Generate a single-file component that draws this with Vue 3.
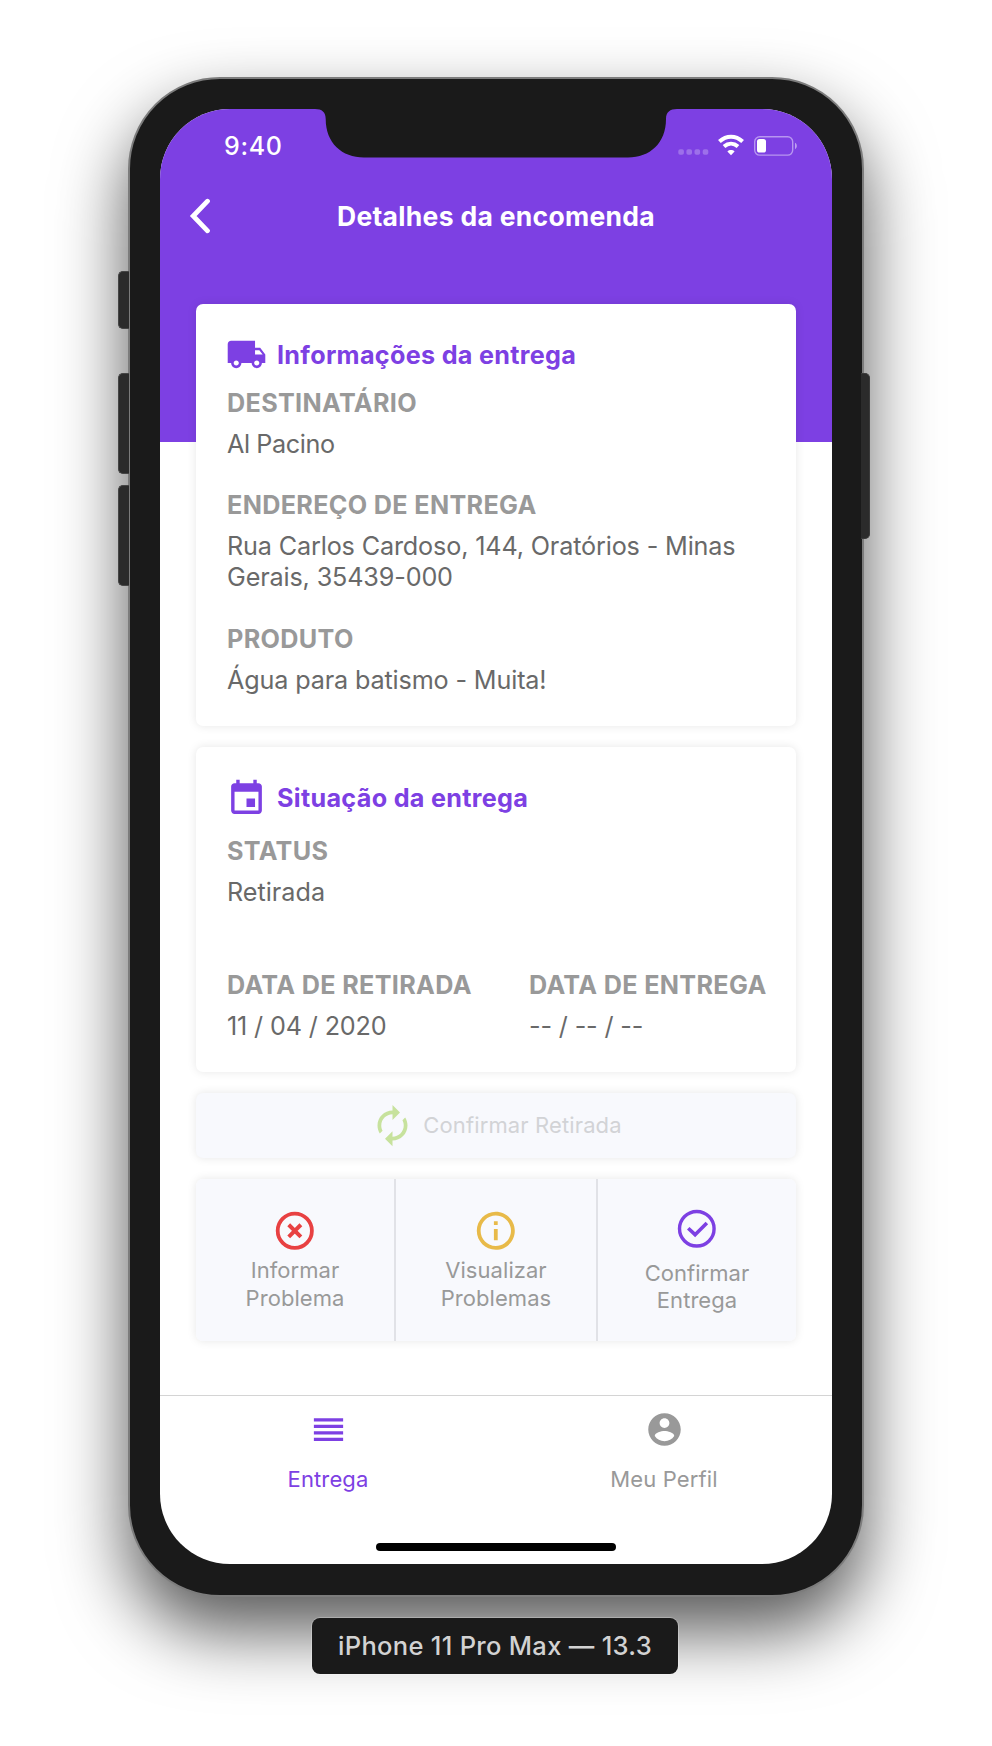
<script setup>
const deliveryFields = [
  { label: 'DESTINATÁRIO', value: 'Al Pacino', tight: true },
  { label: 'ENDEREÇO DE ENTREGA', value: 'Rua Carlos Cardoso, 144, Oratórios - Minas Gerais, 35439-000' },
  { label: 'PRODUTO', value: 'Água para batismo - Muita!' },
]

const dates = [
  { label: 'DATA DE RETIRADA', value: '11 / 04 / 2020' },
  { label: 'DATA DE ENTREGA', value: '-- / -- / --' },
]
</script>

<template>
  <main class="stage">
    <div class="phone">
      <i class="key key-mute"></i>
      <i class="key key-up"></i>
      <i class="key key-down"></i>
      <i class="key key-power"></i>

      <div class="screen">
        <svg class="notch" viewBox="0 0 672 50" width="672" height="50" aria-hidden="true">
          <path d="M155 -1V0C162 0 165.7 3 165.7 10C165.7 34 182 48.5 204 48.5H468C490 48.5 506 34 506 10C506 3 510 0 517 0V-1Z" fill="#1a1a1a" />
        </svg>

        <header class="hero">
          <div class="status-bar">
            <time class="clock">9:40</time>
            <svg class="status-icons" viewBox="0 0 120 24" width="120" height="24" aria-hidden="true">
              <g fill="#fff" fill-opacity=".25">
                <rect x=".3" y="15.2" width="5.6" height="5.6" rx="1.8" />
                <rect x="8.4" y="15.2" width="5.6" height="5.6" rx="1.8" />
                <rect x="16.5" y="15.2" width="5.6" height="5.6" rx="1.8" />
                <rect x="24.7" y="15.2" width="5.6" height="5.6" rx="1.8" />
              </g>
              <g fill="none" stroke="#fff" stroke-width="4">
                <path d="M41.4 7.6C48.5 1.1 57.5 1.1 64.6 7.6" />
                <path d="M46 12.5C50.3 8.7 55.7 8.7 60 12.5" />
              </g>
              <path d="M53 21.2L49.4 17.4C51.4 15.5 54.6 15.5 56.6 17.4Z" fill="#fff" />
              <rect x="76.7" y="2.7" width="38" height="18.4" rx="5" fill="none" stroke="#fff" stroke-opacity=".45" stroke-width="1.4" />
              <rect x="79" y="5" width="9" height="13.6" rx="2.6" fill="#fff" />
              <path d="M117 8.8C119.4 10 119.4 14 117 15.2Z" fill="#fff" fill-opacity=".5" />
            </svg>
          </div>
          <nav class="nav">
            <svg class="back" viewBox="0 0 24 36" width="24" height="36" aria-hidden="true">
              <path d="M18.5 3.2L4.2 18L18.5 32.8" fill="none" stroke="#fff" stroke-width="4.8" stroke-linejoin="miter" stroke-linecap="round" />
            </svg>
            <h1 class="title">Detalhes da encomenda</h1>
          </nav>
        </header>

        <div class="content">
          <section class="card">
            <h2 class="card-title">
              <svg viewBox="0 0 24 24" width="41" height="41" fill="currentColor" aria-hidden="true">
                <path d="M20 8h-3V4H3c-1.1 0-2 .9-2 2v11h2c0 1.66 1.34 3 3 3s3-1.34 3-3h6c0 1.66 1.34 3 3 3s3-1.34 3-3h2v-5l-3-4zM6 18.5c-.83 0-1.5-.67-1.5-1.5s.67-1.5 1.5-1.5 1.5.67 1.5 1.5-.67 1.5-1.5 1.5zm13.5-9l1.96 2.5H17V9.5h2.5zm-1.5 9c-.83 0-1.5-.67-1.5-1.5s.67-1.5 1.5-1.5 1.5.67 1.5 1.5-.67 1.5-1.5 1.5z" />
              </svg>
              Informações da entrega
            </h2>
            <dl class="fields">
              <div v-for="f in deliveryFields" :key="f.label">
                <dt>{{ f.label }}</dt>
                <dd :class="{ tight: f.tight }">{{ f.value }}</dd>
              </div>
            </dl>
          </section>

          <section class="card card-status">
            <h2 class="card-title">
              <svg viewBox="0 0 24 24" width="41" height="41" fill="currentColor" aria-hidden="true">
                <path d="M17 12h-5v5h5v-5zM16 1v2H8V1H6v2H5c-1.11 0-1.99.9-1.99 2L3 19c0 1.1.89 2 2 2h14c1.1 0 2-.9 2-2V5c0-1.1-.9-2-2-2h-1V1h-2zm3 18H5V8h14v11z" />
              </svg>
              Situação da entrega
            </h2>
            <dl class="fields status-fields">
              <div>
                <dt>STATUS</dt>
                <dd class="loose">Retirada</dd>
              </div>
              <div class="dates">
                <div v-for="d in dates" :key="d.label">
                  <dt>{{ d.label }}</dt>
                  <dd>{{ d.value }}</dd>
                </div>
              </div>
            </dl>
          </section>

          <button class="confirm" type="button" disabled>
            <svg viewBox="0 0 24 24" width="45" height="45" fill="#c7e29d" aria-hidden="true">
              <path d="M12 6v3l4-4-4-4v3c-4.42 0-8 3.58-8 8 0 1.57.46 3.03 1.24 4.26L6.7 14.8c-.45-.83-.7-1.79-.7-2.8 0-3.31 2.69-6 6-6zm6.76 1.74L17.3 9.2c.44.84.7 1.79.7 2.8 0 3.31-2.69 6-6 6v-3l-4 4 4 4v-3c4.42 0 8-3.58 8-8 0-1.57-.46-3.03-1.24-4.26z" />
            </svg>
            Confirmar Retirada
          </button>

          <div class="actions">
            <button class="action" type="button">
              <svg viewBox="0 0 24 24" width="45.6" height="45.6" fill="none" stroke="#e84142" aria-hidden="true">
                <circle cx="12" cy="12" r="9" stroke-width="2" />
                <path d="M8.8 8.8L15.2 15.2M15.2 8.8L8.8 15.2" stroke-width="2.1" />
              </svg>
              <span>Informar<br />Problema</span>
            </button>
            <button class="action" type="button">
              <svg viewBox="0 0 24 24" width="45.6" height="45.6" fill="#e8ba49" aria-hidden="true">
                <path d="M11 17h2v-6h-2v6zm1-15C6.48 2 2 6.48 2 12s4.48 10 10 10 10-4.48 10-10S17.52 2 12 2zm0 18c-4.41 0-8-3.59-8-8s3.59-8 8-8 8 3.59 8 8-3.59 8-8 8zM11 9h2V7h-2v2z" />
              </svg>
              <span>Visualizar<br />Problemas</span>
            </button>
            <button class="action action-deliver" type="button">
              <svg viewBox="0 0 24 24" width="45.6" height="45.6" fill="none" stroke="#7d40e3" stroke-width="1.8" aria-hidden="true">
                <circle cx="12" cy="12" r="9.1" />
                <path d="M7.5 11.7L11.1 15.1L17.3 8.9" stroke-width="1.9" />
              </svg>
              <span>Confirmar<br />Entrega</span>
            </button>
          </div>
        </div>

        <footer class="tabs">
          <a class="tab tab-active">
            <svg viewBox="0 0 24 24" width="39" height="39" fill="currentColor" aria-hidden="true">
              <path d="M3 15h18v-2H3v2zm0 4h18v-2H3v2zm0-8h18V9H3v2zm0-6v2h18V5H3z" />
            </svg>
            Entrega
          </a>
          <a class="tab">
            <svg viewBox="0 0 24 24" width="39" height="39" fill="currentColor" aria-hidden="true">
              <path d="M12 2C6.48 2 2 6.48 2 12s4.48 10 10 10 10-4.48 10-10S17.52 2 12 2zm0 3c1.66 0 3 1.34 3 3s-1.34 3-3 3-3-1.34-3-3 1.34-3 3-3zm0 14.2c-2.5 0-4.71-1.28-6-3.22.03-1.99 4-3.08 6-3.08 1.99 0 5.97 1.09 6 3.08-1.29 1.94-3.5 3.22-6 3.22z" />
            </svg>
            Meu Perfil
          </a>
        </footer>
        <i class="home-bar"></i>
      </div>
    </div>
    <p class="device">iPhone 11 Pro Max — 13.3</p>
  </main>
</template>

<style>
body {
  background: #fff;
}
</style>

<style scoped>
.stage {
  box-sizing: border-box;
  width: 992px;
  height: 1746px;
  padding-top: 77px;
  overflow: hidden;
  display: flex;
  flex-direction: column;
  align-items: center;
  background: #fff;
  font-family: Inter, "Liberation Sans", sans-serif;
}

.phone {
  position: relative;
  box-sizing: border-box;
  width: 736px;
  height: 1520px;
  padding: 30px;
  border: 2px solid #7c7c7c;
  border-radius: 92px;
  background: #1a1a1a;
  box-shadow: 0 34px 70px rgba(0, 0, 0, 0.66);
}

.key {
  position: absolute;
  left: -12px;
  width: 10px;
  border: 1px solid #454545;
  border-right: 0;
  border-radius: 5px 0 0 5px;
  background: #2b2b2b;
}
.key-mute { top: 192px; height: 56px; }
.key-up { top: 294px; height: 99px; }
.key-down { top: 406px; height: 99px; }
.key-power {
  top: 294px;
  left: auto;
  right: -8px;
  width: 8px;
  height: 164px;
  border: 1px solid #3a3a3a;
  border-left: 0;
  border-radius: 0 5px 5px 0;
}

.screen {
  position: relative;
  height: 1455px;
  overflow: hidden;
  display: flex;
  flex-direction: column;
  border-radius: 70px;
  background: #fff;
}

.notch {
  position: absolute;
  top: 0;
  left: 0;
}

.hero {
  flex: none;
  height: 333px;
  background: #7d40e3;
  color: #fff;
}

.status-bar {
  display: flex;
  justify-content: space-between;
  align-items: center;
  height: 73px;
  padding: 0 34px 0 64px;
}

.clock {
  font-size: 25px;
  font-weight: 500;
  letter-spacing: 0.7px;
}

.nav {
  display: grid;
  grid-template-columns: 72px 1fr 72px;
  align-items: center;
  height: 68px;
}

.back {
  justify-self: center;
  margin-left: 9px;
}

.title {
  margin: 0;
  font-size: 26.5px;
  font-weight: 700;
  letter-spacing: 0.3px;
  text-align: center;
}

.content {
  position: relative;
  display: flex;
  flex-direction: column;
  gap: 21px;
  margin-top: -138px;
  padding: 0 36px;
}

.card {
  padding: 30px 31px;
  border-radius: 7px;
  background: #fff;
  box-shadow: 0 0 10px rgba(0, 0, 0, 0.1);
}

.card-status {
  padding-top: 31px;
}

.card-title {
  display: flex;
  align-items: center;
  gap: 10px;
  height: 41px;
  margin: 0 0 0 -1px;
  color: #7d40e3;
  font-size: 25.2px;
  font-weight: 700;
  letter-spacing: 0.3px;
}

.fields {
  display: flex;
  flex-direction: column;
  gap: 30.5px;
  margin: 12.5px 0 0;
  font-size: 25.2px;
  line-height: 31px;
}

.fields dt {
  color: #999;
  font-weight: 700;
  letter-spacing: 0.33px;
}

.fields dd {
  margin: 10px 0 0;
  color: #696969;
  letter-spacing: -0.15px;
}

.fields dd.tight { letter-spacing: -0.4px; }
.fields dd.loose { letter-spacing: 0; }

.status-fields {
  gap: 62px;
  margin-top: 17px;
}

.dates {
  display: grid;
  grid-template-columns: 302px 1fr;
  white-space: nowrap;
}

.confirm,
.action {
  border: 0;
  padding: 0;
  font: inherit;
  font-size: 22px;
  background: #f8f9fd;
}

.confirm {
  display: flex;
  justify-content: center;
  align-items: center;
  gap: 8px;
  height: 65.3px;
  border-radius: 7px;
  color: #d2d3d6;
  letter-spacing: 0.13px;
  box-shadow: 0 0 10px rgba(0, 0, 0, 0.1);
}

.actions {
  display: grid;
  grid-template-columns: 198px 202px 1fr;
  height: 162.5px;
  overflow: hidden;
  border-radius: 7px;
  box-shadow: 0 0 10px rgba(0, 0, 0, 0.1);
}

.action {
  display: flex;
  flex-direction: column;
  align-items: center;
  gap: 4px;
  padding-top: 29px;
  color: #999;
  line-height: 27.7px;
  letter-spacing: 0.05px;
}

.action + .action {
  border-left: 2px solid #e1e2e7;
}

.action-deliver {
  gap: 8px;
  padding-top: 27.3px;
}

.tabs {
  flex: none;
  box-sizing: border-box;
  display: grid;
  grid-template-columns: 1fr 1fr;
  height: 169px;
  margin-top: auto;
  border-top: 1px solid #d4d4d4;
}

.tab {
  display: flex;
  flex-direction: column;
  align-items: center;
  gap: 16px;
  padding-top: 14px;
  color: #999;
  font-size: 22px;
  line-height: 28px;
  letter-spacing: 0.12px;
}

.tab-active {
  color: #7d40e3;
}

.home-bar {
  position: absolute;
  bottom: 13px;
  left: 216px;
  width: 240px;
  height: 8px;
  border-radius: 4px;
  background: #000;
}

.device {
  position: relative;
  box-sizing: border-box;
  width: 366px;
  height: 56px;
  margin: 21px 2px 0 0;
  border-radius: 8px;
  background: #1a1a1a;
  box-shadow: 0 0 0 1px rgba(255, 255, 255, 0.25);
  color: #d2d2d2;
  font-size: 25.5px;
  font-weight: 500;
  line-height: 56px;
  letter-spacing: 0.3px;
  text-align: center;
}
</style>
